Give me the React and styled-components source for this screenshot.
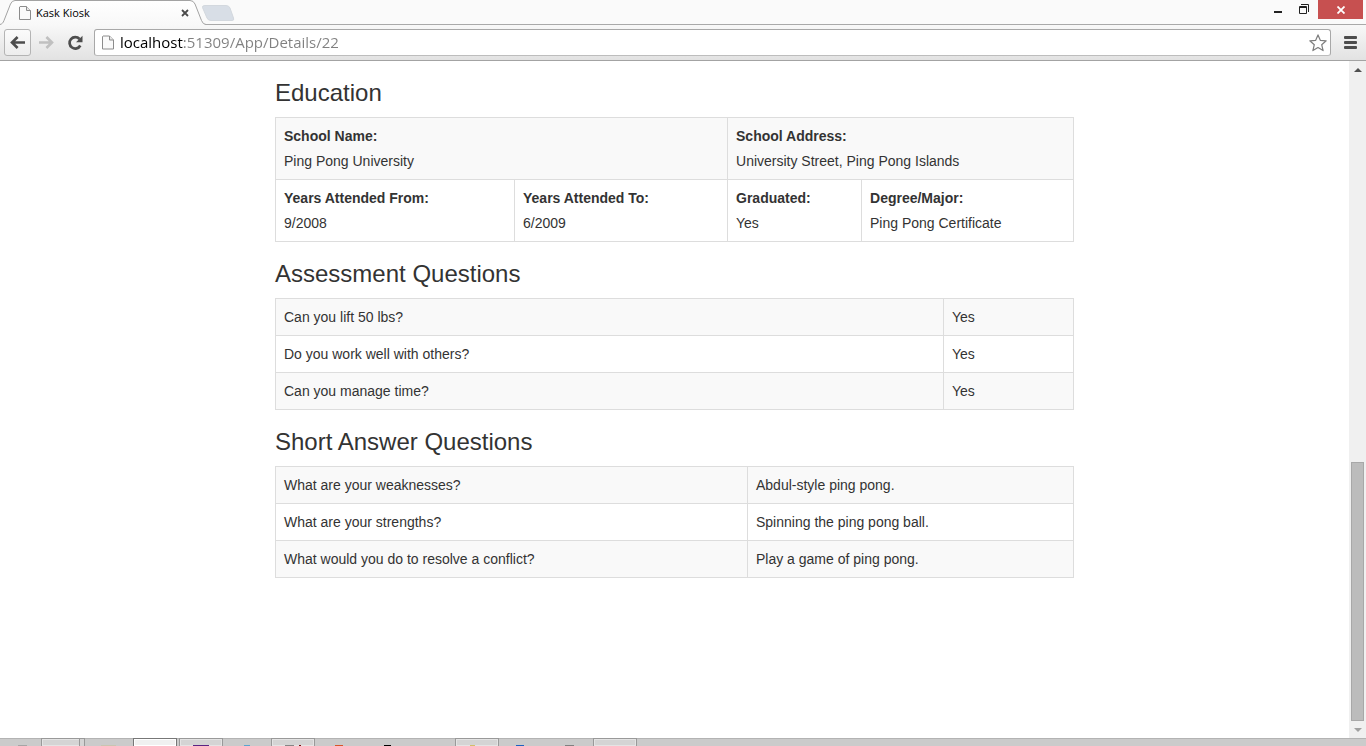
import React from 'react';
import styled, { createGlobalStyle } from 'styled-components';

const GlobalStyle = createGlobalStyle`
  * { box-sizing: border-box; }
  body {
    margin: 0;
    background: #fff;
    color: #333;
    font: 14px/20px "Liberation Sans", Arial, sans-serif;
  }
  button { padding: 0; border: 0; background: none; font: inherit; color: inherit; }
  svg { display: block; flex: none; }
`;

const Shell = styled.div`
  display: flex;
  flex-direction: column;
  min-height: 100vh;
`;

/* Window frame */

const TabStrip = styled.header`
  display: flex;
  justify-content: space-between;
  height: 25px;
  background: #fafafa;
  border-bottom: 1px solid #a9a9a9;
`;

const Tabs = styled.div`
  display: flex;
  height: 25px;
`;

const Tab = styled.div`
  position: relative;
  display: flex;
  align-items: center;
  width: 203px;
  height: 25px;
  padding: 1px 14px 0 19px;
  font: 11px/16px "Open Sans", "Segoe UI", sans-serif;
  color: #000;
`;

const TabShape = styled.svg`
  position: absolute;
  left: 0;
  top: 0;
`;

const TabTitle = styled.span`
  position: relative;
  flex: 1;
  padding-left: 5px;
`;

const TabIcon = styled.span`
  position: relative;
`;

const TabClose = styled.button`
  position: relative;
  display: grid;
  place-items: center;
  width: 8px;
  height: 16px;
`;

const WindowControls = styled.div`
  display: flex;
  padding-right: 3px;
`;

const WindowButton = styled.button`
  display: grid;
  place-items: center;
  width: ${(p) => (p.$close ? 45 : 26)}px;
  height: 19px;
  background: ${(p) => (p.$close ? '#c75050' : 'transparent')};
`;

const Toolbar = styled.nav`
  display: flex;
  align-items: center;
  height: 36px;
  padding: 0 2px 0 4px;
  background: linear-gradient(#f8f8f8, #e2e2e2);
  border-bottom: 1px solid #a3a3a3;
`;

const ToolButton = styled.button`
  display: grid;
  place-items: center;
  width: ${(p) => p.$width || 27}px;
  height: 27px;
  border: 1px solid ${(p) => (p.$framed ? '#b4b4b4' : 'transparent')};
  border-radius: 3px;
  background: ${(p) => (p.$framed ? 'linear-gradient(#fbfbfb, #ededed)' : 'none')};
`;

const AddressBar = styled.div`
  display: flex;
  align-items: center;
  flex: 1;
  height: 27px;
  margin: 0 6px;
  padding: 0 3px 0 7px;
  background: #fff;
  border: 1px solid #a8a8a8;
  border-bottom-color: #bdbdbd;
  border-radius: 3px;
`;

const AddressInput = styled.input`
  flex: 1;
  min-width: 0;
  height: 24px;
  margin-left: 6px;
  padding: 0 0 2px;
  border: 0;
  outline: 0;
  font: 15px/22px "Open Sans", "Segoe UI", sans-serif;
  color: transparent;
  background: linear-gradient(90deg, #000 63px, #808080 63px);
  background-clip: text;
  -webkit-background-clip: text;
`;

/* Page viewport */

const Viewport = styled.div`
  display: flex;
  flex: 1;
`;

const Page = styled.main`
  flex: 1;
  padding: 20px 0;
`;

const Container = styled.div`
  width: 100%;
  max-width: 799px;
  margin: 0 auto;
`;

const Section = styled.section`
  margin-bottom: 20px;
`;

const Heading = styled.h3`
  margin: 0 0 12px;
  font-size: 24px;
  font-weight: 400;
  line-height: 24px;
`;

const Table = styled.table`
  width: 100%;
  table-layout: fixed;
  border-collapse: collapse;
`;

const Row = styled.tr`
  &:nth-child(odd) { background: #f9f9f9; }
`;

const Cell = styled.td`
  padding: 8px;
  border: 1px solid #ddd;
  vertical-align: top;
`;

const FieldName = styled.strong`
  display: block;
  margin-bottom: 5px;
`;

const Scrollbar = styled.div`
  display: flex;
  flex-direction: column;
  width: 17px;
  background: #f0f0f0;
`;

const ScrollArrow = styled.button`
  display: grid;
  place-items: center;
  height: 17px;
`;

const ScrollGap = styled.div`
  flex: 386;
`;

const ScrollThumb = styled.div`
  flex: 259;
  margin: 0 2px;
  background: #bcbcbc;
  border: 1px solid #a8a8a8;
`;

/* Taskbar */

const Taskbar = styled.footer`
  display: flex;
  gap: 2px;
  height: 8px;
  overflow: hidden;
  background: #cbcbcb;
  box-shadow: inset 0 1px #b3b3b3;
`;

const StartArea = styled.div`
  display: flex;
  align-items: flex-end;
  width: 39px;
`;

const TASK_FRAME = {
  open: 'border: 1px solid #999; border-bottom: 0; background: #d4d4d4; box-shadow: inset 0 0 0 1px #e4e4e4;',
  active: 'border: 1px solid #777; border-bottom: 0; background: #f0f0f0; box-shadow: inset 0 0 0 1px #fff;',
};

const TaskButton = styled.button`
  display: flex;
  align-items: flex-end;
  justify-content: flex-end;
  width: 44px;
  height: 8px;
  ${(p) => TASK_FRAME[p.$state] || ''}
`;

const StackEdge = styled.span`
  width: 5px;
  height: 7px;
  border-left: 1px solid #999;
  background: #d4d4d4;
`;

function PageIcon({ width = 12, height = 14 }) {
  return (
    <svg width={width} height={height} viewBox="0 0 12 14" fill="#fafafa" stroke="#8c8c8c">
      <path d="M1 .5h6.5l4 4v9H.5V1z" />
      <path d="M7.5.5v4h4" fill="#e6e6e6" />
    </svg>
  );
}

function Question({ text, answer }) {
  return (
    <Row>
      <Cell>{text}</Cell>
      <Cell>{answer}</Cell>
    </Row>
  );
}

function QuestionTable({ title, width, items }) {
  return (
    <Section>
      <Heading>{title}</Heading>
      <Table>
        <colgroup>
          <col width={width} />
          <col />
        </colgroup>
        <tbody>
          {items.map(([text, answer]) => (
            <Question key={text} text={text} answer={answer} />
          ))}
        </tbody>
      </Table>
    </Section>
  );
}

function Field({ name, value, span }) {
  return (
    <Cell colSpan={span}>
      <FieldName>{name}</FieldName>
      {value}
    </Cell>
  );
}

const TASKS = [
  { name: 'Window group', state: 'open', stacked: true },
  { name: 'Folder', marks: [[14, 15, '#c9c5b0']] },
  { name: 'Browser', state: 'active' },
  { name: 'Visual Studio', state: 'open', marks: [[14, 16, '#5b2483']] },
  { name: 'Globe', marks: [[19, 6, '#5aa5cf']] },
  { name: 'Editor', state: 'open', marks: [[14, 9, '#858585'], [28, 2, '#7a1010']] },
  { name: 'Media', marks: [[18, 8, '#d8552a']] },
  { name: 'Console', marks: [[21, 7, '#000']] },
  { name: 'Blank' },
  { name: 'Files', state: 'open', marks: [[15, 5, '#d3bf68']] },
  { name: 'Mail', marks: [[15, 8, '#1c62c0']] },
  { name: 'Settings', marks: [[18, 9, '#808080']] },
  { name: 'Notes', state: 'open' },
];

function Task({ name, state, stacked, marks = [] }) {
  const inset = state ? 1 : 0;
  return (
    <TaskButton $state={state} aria-label={name}>
      {stacked && <StackEdge />}
      {marks.length > 0 && (
        <svg width={44 - inset * 2} height="1">
          {marks.map(([x, w, fill]) => (
            <rect key={x} x={x - inset} width={w} height="1" fill={fill} />
          ))}
        </svg>
      )}
    </TaskButton>
  );
}

export default function App() {
  return (
    <Shell>
      <GlobalStyle />
      <TabStrip>
        <Tabs>
          <Tab>
            <TabShape width="240" height="25" viewBox="0 0 240 25">
              <defs>
                <linearGradient id="tabFill" x2="0" y2="1">
                  <stop stopColor="#fff" />
                  <stop offset="1" stopColor="#f8f8f8" />
                </linearGradient>
              </defs>
              <path
                d="M0 25V24.5C2 24 3 23 4 20.5L10.5 4Q12 .5 15 .5H190Q193.5 .5 195 4L201.5 20.5Q203 24.5 206 24.5V25Z"
                fill="url(#tabFill)"
              />
              <path
                d="M0 24.5C2 24 3 23 4 20.5L10.5 4Q12 .5 15 .5H190Q193.5 .5 195 4L201.5 20.5Q203 24.5 206 24.5"
                fill="none"
                stroke="#a3a3a3"
              />
              <path
                d="M205 5.5H226Q229 5.5 230 8L233.5 18Q234.5 20.5 232 20.5H211Q208 20.5 207 18L202.5 7.5Q202 5.5 205 5.5Z"
                fill="#d8dee6"
                stroke="#d3d8de"
              />
            </TabShape>
            <TabIcon><PageIcon /></TabIcon>
            <TabTitle>Kask Kiosk</TabTitle>
            <TabClose aria-label="Close tab">
              <svg width="8" height="8" viewBox="0 0 8 8" stroke="#4a4a4a" strokeWidth="1.8">
                <path d="M1 1l6 6M7 1L1 7" />
              </svg>
            </TabClose>
          </Tab>
        </Tabs>
        <WindowControls>
          <WindowButton aria-label="Minimize">
            <svg width="26" height="19"><rect x="8" y="11" width="8" height="2" fill="#222" /></svg>
          </WindowButton>
          <WindowButton aria-label="Restore">
            <svg width="26" height="19" fill="none" stroke="#222">
              <path d="M9 4.5h7.5V12" />
              <path d="M7.5 6.5h7v7h-7zM7 7.5h8" />
            </svg>
          </WindowButton>
          <WindowButton $close aria-label="Close window">
            <svg width="8" height="8" viewBox="0 0 8 8" stroke="#fff" strokeWidth="1.8">
              <path d="M.5.5l7 7M7.5.5l-7 7" />
            </svg>
          </WindowButton>
        </WindowControls>
      </TabStrip>

      <Toolbar>
        <ToolButton $framed aria-label="Back">
          <svg width="15" height="13" viewBox="0 0 15 13" fill="none" stroke="#4d4d4d" strokeWidth="2.6">
            <path d="M2 6.5h13M7.6 1L2 6.5l5.6 5.5" />
          </svg>
        </ToolButton>
        <ToolButton $width={31} aria-label="Forward">
          <svg width="15" height="13" viewBox="0 0 15 13" fill="none" stroke="#c0c0c0" strokeWidth="2.6">
            <path d="M0 6.5h13M7.4 1L13 6.5L7.4 12" />
          </svg>
        </ToolButton>
        <ToolButton $width={26} aria-label="Reload">
          <svg width="16" height="16" viewBox="0 0 16 16">
            <path d="M12.5 4A5.7 5.7 0 1 0 13.3 10.5" fill="none" stroke="#4d4d4d" strokeWidth="2.7" />
            <path d="M15.5 .8V7.3H9z" fill="#4d4d4d" />
          </svg>
        </ToolButton>
        <AddressBar>
          <PageIcon width={12} height={15} />
          <AddressInput aria-label="Address" defaultValue="localhost:51309/App/Details/22" spellCheck={false} />
          <svg width="18" height="18" viewBox="0 0 18 18" fill="#fff" stroke="#7d7d7d" strokeWidth="1.2" strokeLinejoin="round">
            <path d="M9 .9L11.3 6.3L17.2 6.8L12.7 10.7L14.1 16.6L9 13.5L3.9 16.6L5.3 10.7L.8 6.8L6.7 6.3Z" />
          </svg>
        </AddressBar>
        <ToolButton aria-label="Menu">
          <svg width="13" height="13" fill="#4d4d4d">
            <rect width="13" height="3" rx="1" />
            <rect y="5" width="13" height="3" rx="1" />
            <rect y="10" width="13" height="3" rx="1" />
          </svg>
        </ToolButton>
      </Toolbar>

      <Viewport>
        <Page>
          <Container>
            <Section>
              <Heading>Education</Heading>
              <Table>
                <colgroup>
                  <col width="239" />
                  <col width="213" />
                  <col width="134" />
                  <col />
                </colgroup>
                <tbody>
                  <Row>
                    <Field span={2} name="School Name:" value="Ping Pong University" />
                    <Field span={2} name="School Address:" value="University Street, Ping Pong Islands" />
                  </Row>
                  <Row>
                    <Field name="Years Attended From:" value="9/2008" />
                    <Field name="Years Attended To:" value="6/2009" />
                    <Field name="Graduated:" value="Yes" />
                    <Field name="Degree/Major:" value="Ping Pong Certificate" />
                  </Row>
                </tbody>
              </Table>
            </Section>
            <QuestionTable
              title="Assessment Questions"
              width="668"
              items={[
                ['Can you lift 50 lbs?', 'Yes'],
                ['Do you work well with others?', 'Yes'],
                ['Can you manage time?', 'Yes'],
              ]}
            />
            <QuestionTable
              title="Short Answer Questions"
              width="472"
              items={[
                ['What are your weaknesses?', 'Abdul-style ping pong.'],
                ['What are your strengths?', 'Spinning the ping pong ball.'],
                ['What would you do to resolve a conflict?', 'Play a game of ping pong.'],
              ]}
            />
          </Container>
        </Page>
        <Scrollbar>
          <ScrollArrow aria-label="Scroll up">
            <svg width="8" height="4" fill="#505050"><path d="M0 4L4 0l4 4z" /></svg>
          </ScrollArrow>
          <ScrollGap />
          <ScrollThumb />
          <ScrollArrow aria-label="Scroll down">
            <svg width="8" height="4" fill="#a0a0a0"><path d="M0 0l4 4 4-4z" /></svg>
          </ScrollArrow>
        </Scrollbar>
      </Viewport>

      <Taskbar>
        <StartArea>
          <svg width="39" height="1"><rect x="18" width="9" height="1" fill="#a5a5a5" /></svg>
        </StartArea>
        {TASKS.map((task) => (
          <Task key={task.name} {...task} />
        ))}
      </Taskbar>
    </Shell>
  );
}
